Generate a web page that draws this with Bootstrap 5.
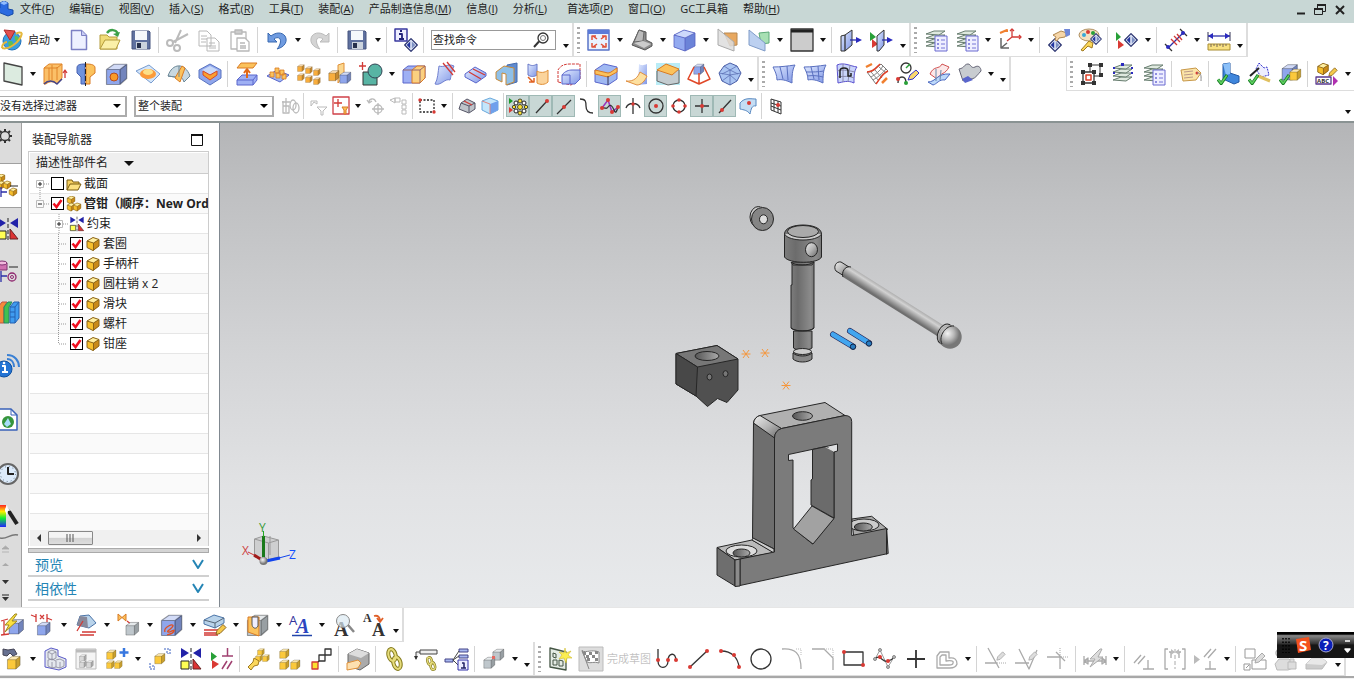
<!DOCTYPE html>
<html lang="zh-CN">
<head>
<meta charset="utf-8">
<meta name="viewport" content="width=device-width, initial-scale=1">
<title>装配</title>
<link href="https://cdn.jsdelivr.net/npm/bootstrap@5.3.0/dist/css/bootstrap.min.css" rel="stylesheet">
<style>
body{font:12px/16px "Open Sans","Noto Sans CJK SC",sans-serif;color:#222;background:#fff}
button,select,input{font:inherit;color:inherit}
button{background:none;border:0;padding:0}
.menubar{background:#c8d7d5;height:23px;font-size:11px;padding-bottom:6px}
.menus{gap:15px}
.menus a{color:#222;text-decoration:none;white-space:nowrap}
.wide{margin-left:5px}
.band{height:34px;margin-left:-4px}
.band-options{height:32px;border-bottom:2px solid #8a9393}
.strip{border:solid #ddd;border-width:0 2px 1px 0;font-size:11px}
.strip-left{border-left:1px solid #ddd}
.caption{padding:0 1px;white-space:nowrap}
.tool{width:31px;height:30px;flex:none;display:flex;align-items:center;justify-content:center}
.tool svg{width:24px;height:24px;overflow:visible}
.tool.narrow{width:23px;height:22px}
.tool.narrow svg{width:20px;height:20px}
.tool.pressed{background:#c8d7d5;border:1px solid #9fb9b5}
.arrow{width:12px;height:30px;flex:none;display:flex;align-items:center;justify-content:center}
.arrow::after{content:"";border:solid transparent;border-width:4px 3px 0;border-top-color:#111}
.arrow.more{align-items:flex-end;padding-bottom:7px}
.rule{width:1px;height:26px;background:#d4d4d4;margin:0 3px 0 2px;flex:none}
.band-options .rule{margin:0 2px}
.grip{width:3px;height:26px;margin:0 3px;flex:none;background:repeating-linear-gradient(#aaa 0 2px,#fff 2px 5px)}
.finder{width:125px;height:20px;border:1px solid #999;margin:0 4px}
.finder input{border:0;outline:0;padding:0 1px;font-size:11px;width:100px;background:none}
.finder input::placeholder{color:#222;opacity:1}
.picker{height:21px;border:2px solid #acacac;border-width:1px 2px 2px;padding:0 2px;font-size:11px;line-height:16px;border-radius:0;appearance:none;background:#fff url("data:image/svg+xml,%3Csvg xmlns='http://www.w3.org/2000/svg' viewBox='0 0 8 4'%3E%3Cpath d='M0 0h8L4 4z'/%3E%3C/svg%3E") no-repeat right 4px center/8px 4px}
.picker-filter{width:131px}.picker-scope{width:140px;margin:0 4px 0 7px}
.work{border-bottom:1px solid #e6e6e6}
.tabs{width:22px;background:#dcdcdc;border-right:1px solid #a0a0a0;overflow:hidden}
.tabs button{flex:none;height:42px;width:21px;display:flex;align-items:center}
.tabs svg{width:24px;height:24px;flex:none;margin-left:-4px}
.tabs .head{height:41px;border-bottom:1px solid #a0a0a0;padding-bottom:14px}
.tabs .current{height:44px;width:22px;background:#fff;border-bottom:1px solid #a0a0a0}
.tabs .tall{height:54px}.tabs .short{height:30px}
.tabs .step{height:16px}.tabs .step svg{height:16px}
.tabs .wave{height:10px;margin:0}
.tabs .group{margin-top:5px}
.navigator{width:198px;border-right:1px solid #808890;background:#fff}
.nav-head{padding:5px 16px 0 10px;height:28px;line-height:20px}
.tree{margin:0 10px 0 6px;border:1px solid #ccc;border-bottom:0;padding:1px 0 0 1px;overflow:hidden;min-height:0}
.tree-head{height:21px;background:#efefef;border-bottom:1px solid #ccc;padding:2px 6px;flex:none}
.rows{list-style:none;margin:0;padding:0;flex:1 1 0;min-height:0;overflow:hidden}
.rows li{height:20px;display:flex;align-items:center;border-bottom:1px solid #e6e6e6;white-space:nowrap;padding-left:6px}
.rows li:nth-child(even){background:#fafafa}
.rows .l2{padding-left:25px}
.rows .l3{padding-left:27px}
.rows label,.rows span{padding-left:2px}
.rows .fw-bold{font-weight:700!important}
.rows svg{width:16px;height:16px;flex:none}
.rows .twig{width:14px;height:20px}
.rows .joint{width:12px}
.rows input{appearance:none;width:13px;height:13px;border:1px solid #000;margin:0 2px 0 1px;flex:none;background:#fff;border-radius:0}
.rows input:checked{background:#fff url("data:image/svg+xml,%3Csvg xmlns='http://www.w3.org/2000/svg' viewBox='0 0 12 12'%3E%3Cpath d='M2 6l3 3.5L10 2.5' fill='none' stroke='%23f01020' stroke-width='2.6'/%3E%3C/svg%3E") center/12px 12px}
.slider{height:16px;background:#f0f0f0;flex:none}
.slider button{width:18px}
.thumb{width:45px!important;height:14px;border:1px solid #888!important;background:linear-gradient(#f4f4f4 45%,#d2d2d2 50%,#dedede)!important;border-radius:1px}
.splitter{height:5px;margin:2px 10px 0 6px;background:#d4d4d4;border:1px solid #aaa;flex:none}
.fold{margin:0 10px 0 6px;height:24px;flex:none;border-bottom:2px solid #d0d0d0!important;color:#2585b5;font-size:14px;padding:2px 5px 0 7px;text-align:left}
.fold svg{width:12px;height:12px}
.nav-foot{height:6px;flex:none}
.scene{background:linear-gradient(#b4b5b7,#c0c1c3 16%,#d3d4d6 48%,#e1e2e4 75%,#e8eaec)}
.scene svg{position:absolute;inset:0;width:100%;height:100%}
.base{height:3px;border-top:2px solid #a8a8a8;background:#f4f4f4}
.ime{position:absolute;right:0;bottom:21px;width:77px;height:26px;background:linear-gradient(#000 8%,#888 14%,#333 45%,#161616 50%);z-index:2}
.ime svg{width:77px;height:26px}
/* drawing palette */
svg{fill:none;stroke-linejoin:round}
.vb{fill:#9fb8f2;stroke:#5a66cc}.vo{fill:#fbc25c;stroke:#d97b24}.vy{fill:#fbd75a;stroke:#a07a20}
.vg{fill:#c4ccd0;stroke:#666}.vk{stroke:#333;stroke-width:1.3}
.redline{stroke:#d23a36;stroke-width:1.3}.vn{stroke:#2b2fa8;stroke-width:1.3}.vl{stroke:#aaa;stroke-width:1.3}
.vt{fill:#b9d3ea;stroke:#4b74a8}.dr{fill:#d93a34}.dn{fill:#2b2bbf}.dg{fill:#28a038}.dk{fill:#333}.dl{fill:#bbb}
.cy{color:#fbc93c}.cb{color:#8fa6ec}.cg{color:#bfc7cc}.co{color:#f8ad3c}.cl{color:#d8d8d8}
text{stroke:none;font-family:"Open Sans",sans-serif}
.serif{font-family:"Liberation Serif",serif;font-weight:700}
.edge{stroke:#262626;stroke-width:1}
</style>
</head>
<body class="vh-100 overflow-hidden d-flex flex-column position-relative">
<svg width="0" height="0" class="position-absolute" aria-hidden="true">
<defs>
<linearGradient id="gBall" x1="0" y1="0" x2="1" y2="1"><stop offset="0" stop-color="#eee"/><stop offset=".5" stop-color="#b5b5b5"/><stop offset="1" stop-color="#666"/></linearGradient>
<radialGradient id="gSphere" cx=".4" cy=".35"><stop offset="0" stop-color="#f4f4f4"/><stop offset=".55" stop-color="#b8b8b8"/><stop offset="1" stop-color="#777"/></radialGradient>
<linearGradient id="gShaft"><stop offset="0" stop-color="#7c7c7c"/><stop offset=".3" stop-color="#6c6c6c"/><stop offset=".85" stop-color="#8b8b8b"/><stop offset="1" stop-color="#787878"/></linearGradient>
<linearGradient id="gRod" gradientUnits="userSpaceOnUse" x1="896" y1="293" x2="889" y2="304"><stop offset="0" stop-color="#999"/><stop offset=".4" stop-color="#d2d2d2"/><stop offset="1" stop-color="#6f6f6f"/></linearGradient>
<linearGradient id="gHole"><stop offset="0" stop-color="#555"/><stop offset="1" stop-color="#aaa"/></linearGradient>
<linearGradient id="gBlue" x1="0" y1="0" x2="1" y2="1"><stop offset="0" stop-color="#e2ebff"/><stop offset="1" stop-color="#7f96e6"/></linearGradient>
<linearGradient id="gHue" x1="0" y1="0" x2="0" y2="1"><stop offset="0" stop-color="#f22"/><stop offset=".3" stop-color="#fe0"/><stop offset=".6" stop-color="#1e3"/><stop offset="1" stop-color="#22f"/></linearGradient>
</defs>
<symbol id="cube" viewBox="0 0 16 16"><path d="M1 5L6 1.500h8.500V11L10 15H1z" fill="currentColor"/><path d="M1 5L6 1.500h8.500L10 5z" fill="#fff" fill-opacity=".6"/><path d="M10 5l4.500-3.500V11L10 15z" fill="#000" fill-opacity=".2"/><path d="M1 5L6 1.500h8.500V11L10 15H1zM1 5h9v10M10 5l4.500-3.500" stroke="#000" stroke-opacity=".35" stroke-width=".8"/></symbol>
<symbol id="part" viewBox="0 0 16 16"><path d="M2 5l6-3.500 6 2V10l-6 4.500-6-3z" fill="#f6bf2c"/><path d="M2 5l6-3.500 6 2L8.500 7z" fill="#ffeFA0"/><path d="M8.500 7L14 3.500V10l-5.500 4.500z" fill="#c98a18"/><path d="M2 5l6-3.500 6 2V10l-6 4.500-6-3zM2 5l6.500 2v7.500M8.500 7L14 3.500" stroke="#8a6418"/></symbol>
<symbol id="parts" viewBox="0 0 16 16"><use href="#part" x="0" y="-1" width="10" height="10"/><use href="#part" x="0" y="6" width="10" height="10"/><use href="#part" x="6" y="6" width="10" height="10"/></symbol>
<symbol id="gem" viewBox="0 0 14 14"><path d="M7 .7L13.300 7 7 13.300.7 7z" fill="#dfe6f6" stroke="#27306e" stroke-width="1.200"/><path d="M6.200 3.500v7L2.700 7z" fill="#2335a0"/><path d="M7.800 3.500v7L11.300 7z" fill="#7d90c4"/></symbol>
<symbol id="layers" viewBox="0 0 24 24"><g fill="#dfe9df" stroke="#667c6e"><path d="M2 18l8-3h11l-6 4z"/><path d="M2 14l8-3h11l-6 4z"/><path d="M2 10l8-3h11l-6 4z"/><path d="M2 6l8-3h11l-6 4z"/></g></symbol>
<symbol id="list" viewBox="0 0 24 24"><path d="M11 8h12v15H11z" fill="#eef" stroke="#6a6ad0"/><path d="M13.500 11.500h1v1h-1zM13.500 15.500h1v1h-1zM13.500 19.500h1v1h-1zM17 12h4M17 16h4M17 20h4" stroke="#55c" stroke-width=".8"/></symbol>
<symbol id="ok" viewBox="0 0 12 12"><path d="M1 6l3.500 4.500L11 1" stroke="#157a22" stroke-width="3.400"/><path d="M1.300 6l3.200 4L10.700 1.500" stroke="#5fd060" stroke-width="1.800"/></symbol>
<symbol id="mate" viewBox="0 0 24 24"><path d="M2 1v10l8-5zM22 1v10l-8-5z" fill="#2222a8"/><path d="M12 1v22" stroke="#222" stroke-dasharray="4 2"/><path d="M2 14h8v8H2z" fill="#ff5" stroke="#222"/><path d="M14 12v10h8z" fill="#d33" stroke="#622"/></symbol>
<symbol id="disk" viewBox="0 0 24 24"><path d="M3 3h17l1 1v17H3z" fill="#5f719f" stroke="#46557e"/><path d="M6 3h12v9H6z" fill="#f5f8fb"/><path d="M7 14h11v7H7z" fill="#cbd3dd"/><path d="M8 15h4v5H8z" fill="#26304c"/></symbol>
<symbol id="pencil" viewBox="0 0 12 12"><path d="M1 11l1-4 6-6 3 3-6 6z" fill="#f5c94c" stroke="#8a6420"/></symbol>
<symbol id="graypen" viewBox="0 0 12 12"><path d="M1 11l1-4 6-6 3 3-6 6z" fill="#ddd" stroke="#aaa"/></symbol>
<symbol id="chain" viewBox="0 0 24 24"><g stroke="#857b1c" stroke-width="4"><ellipse cx="9" cy="8" rx="3.500" ry="6" transform="rotate(-15 9 8)"/><ellipse cx="14" cy="16" rx="3.500" ry="6" transform="rotate(-15 14 16)"/></g><g stroke="#e6dc7c" stroke-width="2"><ellipse cx="9" cy="8" rx="3.500" ry="6" transform="rotate(-15 9 8)"/><ellipse cx="14" cy="16" rx="3.500" ry="6" transform="rotate(-15 14 16)"/></g></symbol>
</svg>

<header class="menubar d-flex align-items-center flex-shrink-0">
<svg width="16" height="16" viewBox="0 0 16 16" class="flex-shrink-0" aria-hidden="true"><path d="M0 2l4-2 4 2v6l5 1v4l-5 2-10-4 1-3 1-1z" fill="#2b6be0" stroke="#154aa8"/><path d="M0 2l4-2 4 2-4 2z" fill="#8fbcff"/></svg>
<nav class="menus d-flex flex-grow-1 ps-1"><a href="#">文件(<u>F</u>)</a><a href="#">编辑(<u>E</u>)</a><a href="#">视图(<u>V</u>)</a><a href="#">插入(<u>S</u>)</a><a href="#">格式(<u>R</u>)</a><a href="#">工具(<u>T</u>)</a><a href="#">装配(<u>A</u>)</a><a href="#">产品制造信息(<u>M</u>)</a><a href="#">信息(<u>I</u>)</a><a href="#">分析(<u>L</u>)</a><a href="#" class="wide">首选项(<u>P</u>)</a><a href="#">窗口(<u>O</u>)</a><a href="#">GC工具箱</a><a href="#">帮助(<u>H</u>)</a></nav>
<div class="d-flex gap-2 pe-2 flex-shrink-0">
<button aria-label="最小化"><svg width="10" height="12" viewBox="0 0 10 12"><path d="M1 9.500h8" stroke="#222" stroke-width="2"/></svg></button>
<button aria-label="还原"><svg width="12" height="12" viewBox="0 0 12 12" stroke="#222"><path d="M3.500 4V1.500h8v6H9" /><path d="M3 1h9M0 5h9" stroke-width="2"/><path d="M.5 5h8v5.500h-8z"/></svg></button>
<button aria-label="关闭"><svg width="12" height="12" viewBox="0 0 12 12"><path d="M2 2l8 8M10 2l-8 8" stroke="#222" stroke-width="2"/></svg></button>
</div>
</header>

<div class="band d-flex flex-shrink-0" role="toolbar" aria-label="标准">
<div class="strip d-flex align-items-center">
<button class="tool" aria-label="NX"><svg viewBox="0 0 24 24"><circle cx="12" cy="13" r="9" fill="#3a9fe0" stroke="#2270b8"/><path d="M8 14c3-2 5-1 5 2s-2 5-4 3zM15 8c3 0 5 2 4 6-3 1-5-3-4-6z" fill="#5cbf55"/><path d="M2 20c6 2 18-5 20-15M2 20c0-4 3-6 5-6M22 5c-3-1-5 0-6 1" stroke="#e5b83c" stroke-width="2"/><path d="M4 2l11 1-5 9z" fill="#e05050" stroke="#b02a2a"/></svg></button><button class="caption">启动</button><button class="arrow" aria-label="启动菜单"></button>
<button class="tool" aria-label="新建"><svg viewBox="0 0 24 24"><path d="M4.500 2.500h10l5 5v14h-15z" fill="#eef0ff" stroke="#7d80c4" stroke-width="1.500"/><path d="M14.500 2.500v5h5" fill="#c8ccf4" stroke="#7d80c4"/></svg></button>
<button class="tool" aria-label="打开"><svg viewBox="0 0 24 24"><path d="M2 7h7l2 2h8v12H2z" fill="#f0dc78" stroke="#b49c3c"/><path d="M2 21l5-9h15l-4 9z" fill="#fbf0a8" stroke="#b49c3c"/><path d="M9 5c3-4 9-4 11 1" stroke="#3ca048" stroke-width="2.500"/><path d="M22 4l-2 5-5-3z" fill="#3ca048"/></svg></button>
<button class="tool" aria-label="保存"><svg><use href="#disk"/></svg></button><i class="rule"></i>
<button class="tool" aria-label="剪切"><svg viewBox="0 0 24 24" stroke="#bbb" stroke-width="2"><path d="M15 2L9 15M22 6L7 14"/><circle cx="4" cy="15" r="3"/><circle cx="11" cy="20" r="3"/></svg></button>
<button class="tool" aria-label="复制"><svg viewBox="0 0 24 24" fill="#f4f4f4" stroke="#b8b8b8"><path d="M2 3h8l4 4v11H2zM10 10h8l4 4v9H10z"/><path d="M4 8h6M4 11h6M4 14h5M12 15h6M12 18h7M12 20h7"/></svg></button>
<button class="tool" aria-label="粘贴"><svg viewBox="0 0 24 24" fill="#f0f0f0" stroke="#b8b8b8" stroke-width="1.300"><path d="M3 4h15v17H3z"/><path d="M7 2h7v4H7z" fill="#ccc"/><path d="M9 10h8l4 4v9H9z" fill="#fff"/><path d="M12 15h5M12 18h6M12 20h6"/></svg></button><i class="rule"></i>
<button class="tool" aria-label="撤销"><svg viewBox="0 0 24 24"><path d="M3 5v9h9l-3-3c4-3 8-1 6 5-1 3-3 5-3 5 8-2 11-8 8-13-3-4-9-4-14 0z" fill="#6f9be0" stroke="#3868b0"/></svg></button><button class="arrow" aria-label="撤销菜单"></button>
<button class="tool" aria-label="重做"><svg viewBox="0 0 24 24"><path d="M21 5v9h-9l3-3c-4-3-8-1-6 5 1 3 3 5 3 5-8-2-11-8-8-13 3-4 9-4 14 0z" fill="#d4d4d4" stroke="#bbb"/></svg></button><i class="rule"></i>
<button class="tool" aria-label="另存"><svg><use href="#disk"/></svg></button><button class="arrow" aria-label="保存菜单"></button><i class="rule"></i>
<button class="tool" aria-label="命令信息"><svg viewBox="0 0 24 24"><path d="M1 1h12v12H1z" fill="#eef" stroke="#3a3aa0" stroke-width="1.500"/><path d="M6 3h2M5 6h3v5M5 11h5" stroke="#22227a" stroke-width="1.800"/><use href="#gem" x="10" y="10" width="14" height="14"/></svg></button><i class="rule"></i>
<div class="finder d-flex align-items-center"><input type="text" placeholder="查找命令" aria-label="查找命令"><svg width="18" height="18" viewBox="0 0 18 18"><circle cx="11" cy="7" r="5" class="vk"/><circle cx="11" cy="7" r="2.500" stroke="#777"/><path d="M7 10.500L2 16" stroke="#333" stroke-width="2"/></svg></div>
<button class="arrow more" aria-label="更多"></button></div>
<div class="strip d-flex align-items-center"><i class="grip"></i>
<button class="tool" aria-label="适合窗口"><svg viewBox="0 0 24 24"><path d="M1 2h21v20H1z" fill="#eaf2fe" stroke="#5a74c8" stroke-width="1.500"/><path d="M1 2h21v4H1z" fill="#5a7ad8"/><path d="M6 8l4 3M18 8l-4 3M6 19l4-3M18 19l-4-3M5 12V8h4M19 12V8h-4M5 15v4h4M19 15v4h-4" stroke="#e05038" stroke-width="1.500"/></svg></button><button class="arrow" aria-label="视图菜单"></button>
<button class="tool" aria-label="渲染"><svg viewBox="0 0 24 24"><path d="M4 13L9 2l7 2v8l6 3v3l-7 4L2 17z" fill="#8c8c8c" stroke="#555"/><path d="M9 2l5 2-1 9-9 1z" fill="#bbb" stroke="#666"/><path d="M4 15l9-2 8 3-7 4z" fill="#ccc"/></svg></button><button class="arrow" aria-label="渲染菜单"></button>
<button class="tool" aria-label="定向视图"><svg viewBox="0 0 24 24"><path d="M1 7l10-5 11 3v13l-10 5-11-4z" fill="#6b83d8"/><path d="M1 7l10-5 11 3-10 5z" fill="#cdd9fb"/><path d="M1 7l11 3v13L1 19z" fill="#93aaf0"/><path d="M1 7l11 3 10-5M12 10v13M1 7l10-5 11 3v13l-10 5-11-4z" stroke="#5560c0" stroke-width=".8"/></svg></button><button class="arrow" aria-label="定向菜单"></button>
<button class="tool" aria-label="剖切"><svg viewBox="0 0 24 24"><path d="M8 5h13v12l-7 1z" fill="#e8a860" stroke="#b88850"/><path d="M2 1v16l16 6V14z" fill="#ddd" fill-opacity=".85" stroke="#aaa"/></svg></button>
<button class="tool" aria-label="编辑剖切"><svg viewBox="0 0 24 24"><path d="M12 5l10-1v11l-8 1z" fill="#a8e0b4" stroke="#5ca878"/><path d="M2 2l16 13v8L2 17z" fill="#bcd0f0" stroke="#809cc8"/></svg></button><button class="arrow" aria-label="剖切菜单"></button>
<button class="tool" aria-label="背景"><svg viewBox="0 0 24 24"><path d="M1 1h22v22H1z" fill="#ccc" stroke="#333" stroke-width="1.300"/><path d="M1 3h22" stroke="#222" stroke-width="3"/></svg></button><button class="arrow" aria-label="背景菜单"></button><i class="rule"></i>
<button class="tool" aria-label="窗口移出"><svg viewBox="0 0 24 24"><path d="M2 8l4-1 7-5v15l-7 6H2z" fill="url(#gBlue)" stroke="#333"/><path d="M6 7v16" class="vk"/><path d="M11 12h7" class="vn"/><path d="M17 9l6 3-6 3z" class="dn"/></svg></button>
<button class="tool" aria-label="显示隐藏"><svg viewBox="0 0 24 24"><path d="M0 4v9l6-4z" class="dg"/><path d="M2 11v9l6-4z" class="dr"/><path d="M7 8l7-6v15l-5 6H7z" fill="url(#gBlue)" stroke="#333"/><path d="M12 12h6" class="vn"/><path d="M17 9l6 3-6 3z" class="dn"/></svg></button>
<button class="arrow more" aria-label="更多"></button></div>
<div class="strip d-flex align-items-center"><i class="grip"></i>
<button class="tool" aria-label="图层设置"><svg viewBox="0 0 24 24"><use href="#layers"/><use href="#list"/></svg></button>
<button class="tool" aria-label="图层视图"><svg viewBox="0 0 24 24"><use href="#layers"/><use href="#list"/></svg></button><button class="arrow" aria-label="图层菜单"></button>
<button class="tool" aria-label="坐标系"><svg viewBox="0 0 24 24"><path d="M14 2v7h9M14 9l-5 4" class="redline"/><path d="M12 3l2-2 2 2M21 7l2 2-2 2" class="redline"/><path d="M3 10v10h8M3 20l6-5" stroke="#666" stroke-width="1.500"/><path d="M2 5l7-3v2" stroke="#f08030" stroke-width="2"/></svg></button><button class="arrow" aria-label="坐标系菜单"></button><i class="rule"></i>
<button class="tool" aria-label="对象显示"><svg viewBox="0 0 24 24"><use href="#gem" x="1" y="10" width="14" height="14"/><path d="M6 7l8-4 6 2-2 4-6 1-2 3-2-1 1-3z" fill="#f6d6a8" stroke="#b08850"/><path d="M17 1h6v6l-4 2z" fill="#7088d8"/></svg></button>
<button class="tool" aria-label="编辑对象显示"><svg viewBox="0 0 24 24"><ellipse cx="11" cy="7" rx="10" ry="6" fill="#f4e0c0" stroke="#b09060"/><circle cx="6" cy="7" r="2" fill="#38a8d8"/><circle cx="10" cy="4" r="2" class="dr"/><circle cx="15" cy="5" r="2" class="dg"/><path d="M3 22l8-9 4 2-1 5-4-2-5 5z" class="vy"/><use href="#gem" x="12" y="5" width="12" height="12"/></svg></button><i class="rule"></i>
<button class="tool" aria-label="显示"><svg viewBox="0 0 24 24"><path d="M1 4v9l5-4z" class="dg"/><path d="M3 12v9l6-4z" class="dr"/><use href="#gem" x="9" y="5" width="14" height="14"/></svg></button><button class="arrow" aria-label="显示菜单"></button><i class="rule"></i>
<button class="tool" aria-label="测量"><svg viewBox="0 0 24 24"><path d="M4 20L20 4" class="vn"/><path d="M1 16l7 7M16 1l7 7" class="vk"/><path d="M7 11l6 6M10 8l6 6M13 6l5 6" class="redline"/><circle cx="4" cy="19" r="2" class="dn"/><circle cx="19" cy="5" r="2" class="dn"/></svg></button><button class="arrow" aria-label="测量菜单"></button>
<button class="tool" aria-label="测量距离"><svg viewBox="0 0 24 24"><path d="M1 8h22" class="vn"/><path d="M1 4v9M23 4v9" stroke="#335"/><path d="M1 8l5-3v6zM23 8l-5-3v6z" class="dn"/><path d="M1 16h22v6H1z" fill="#f8e080" stroke="#a88c30"/><path d="M4 16v3M7 16v2M10 16v3M13 16v2M16 16v3M19 16v2" stroke="#765"/></svg></button>
<button class="arrow more" aria-label="更多"></button></div>
</div>

<div class="band d-flex flex-shrink-0" role="toolbar" aria-label="特征">
<div class="strip d-flex align-items-center">
<button class="tool" aria-label="基准平面"><svg viewBox="0 0 24 24"><path d="M4 1l18 4v18L4 19z" fill="#dcebe0" stroke="#444" stroke-width="1.300"/></svg></button><button class="arrow" aria-label="基准菜单"></button>
<button class="tool" aria-label="拉伸"><svg viewBox="0 0 24 24"><path d="M1 6l5-4h13v14l-5 6c-3-3-8-3-11 0H1z" fill="#fbc068" stroke="#e08428"/><path d="M6 6v12M14 5v13M1 6h13l5-4M9 3v15" stroke="#e08428"/><path d="M1 22c4-4 9-4 13 0l5-5" stroke="#448" stroke-width="1.500"/><path d="M22 16V9M20 11l2-3 2 3" class="redline"/></svg></button>
<button class="tool" aria-label="旋转"><svg viewBox="0 0 24 24"><path d="M11 2c-6 0-8 1-8 4v5l4 4v7h4z" fill="#6f92dc" stroke="#4860b0"/><path d="M12 2c6 0 9 1 9 4v5l-5 4v7h-4z" class="vo"/><path d="M11.500 0v24" stroke="#222" stroke-dasharray="5 2"/></svg></button>
<button class="tool" aria-label="孔"><svg viewBox="0 0 24 24"><use href="#cube" class="cb" width="24" height="24"/><circle cx="9" cy="15" r="4" fill="#fb9b2a" stroke="#b84c20"/></svg></button>
<button class="tool" aria-label="凸台"><svg viewBox="0 0 24 24"><path d="M0 9l13-6 11 9-9 9z" fill="#d4e6fa" stroke="#789cd0"/><ellipse cx="12" cy="12" rx="8" ry="5" fill="#fb9b3a"/><ellipse cx="12" cy="10" rx="5" ry="3" fill="#fde088"/></svg></button>
<button class="tool" aria-label="筋板"><svg viewBox="0 0 24 24"><path d="M1 14C5 1 18 0 23 14l-6 6c-2-6-6-7-9-5z" fill="#c8d8e0" stroke="#6c8898"/><path d="M8 16l7-12 3 2-5 14z" class="vo"/><path d="M1 14l7 1M12 4v11" stroke="#6c8898"/></svg></button>
<button class="tool" aria-label="腔体"><svg viewBox="0 0 24 24"><path d="M1 8l11-6 11 6v8l-11 7L1 16z" fill="#8fa6ec" stroke="#5a74c0"/><path d="M4 8l8-4 8 4-8 5z" fill="#c8d8f8"/><path d="M5 9l7 4 7-4v4l-7 5-7-5z" fill="#fba030" stroke="#d84828"/></svg></button><i class="rule"></i>
<button class="tool" aria-label="偏置面"><svg viewBox="0 0 24 24"><path d="M6 1h16l-4 5H2z" class="vo"/><path d="M2 18l5-5h15v5l-4 5H2z" fill="#9fb0f4" stroke="#5a66cc"/><path d="M2 18h16l4-5M18 18v5" stroke="#5a66cc"/><path d="M12 16V8M9 11l3-4 3 4" stroke="#e06818" stroke-width="2"/></svg></button>
<button class="tool" aria-label="阵列特征"><svg viewBox="0 0 24 24"><path d="M1 14l10-6 12 5-9 7z" class="vb"/><g class="vo" stroke-width=".8"><path d="M4 10h4v5H4zM9 6h4v5H9zM10 11h4v5h-4zM14 8h4v5h-4zM16 12h4v5h-4z"/></g></svg></button>
<button class="tool" aria-label="阵列几何"><svg viewBox="0 0 24 24" class="co"><use href="#cube" width="8" height="8" y="2"/><use href="#cube" width="8" height="8" x="8" y="4"/><use href="#cube" width="8" height="8" x="16" y="6"/><use href="#cube" width="8" height="8" y="11"/><use href="#cube" width="8" height="8" x="8" y="13"/><use href="#cube" width="8" height="8" x="16" y="15"/></svg></button>
<button class="tool" aria-label="镜像"><svg viewBox="0 0 24 24"><path d="M10 3l6-2v12l-6 8z" fill="#fbd890" stroke="#e09038"/><use href="#cube" class="co" x="0" y="7" width="12" height="13"/><use href="#cube" class="cb" x="11" y="9" width="13" height="13"/></svg></button>
<button class="tool" aria-label="合并"><svg viewBox="0 0 24 24"><path d="M4 10h14v13H4z" fill="#58b4a4" stroke="#333"/><circle cx="16" cy="9" r="7" fill="#58b4a4" stroke="#345"/><path d="M0 4h7M3.500 0v8" class="redline"/></svg></button><button class="arrow" aria-label="布尔菜单"></button>
<button class="tool" aria-label="拆分体"><svg viewBox="0 0 24 24"><path d="M1 8l5-4h17v12l-5 5H1z" fill="#9fb0f4" stroke="#5a66cc"/><path d="M10 8l5-4h8v12l-5 5h-8z" fill="#fbd080" stroke="#d87828"/><path d="M1 8h17v13M18 8l5-4" stroke="#966"/></svg></button>
<button class="tool" aria-label="修剪片体"><svg viewBox="0 0 24 24"><path d="M6 4c5 2 9-3 15 0-3 6-3 12-4 14-5-2-9 6-15 4 3-5 3-12 4-18z" fill="url(#gBlue)" stroke="#7080d0"/><path d="M10 1l10 12M14 0l8 10" class="redline"/></svg></button>
<button class="tool" aria-label="缝合"><svg viewBox="0 0 24 24"><path d="M1 12l10-7 11 6v3l-10 7-11-6z" fill="url(#gBlue)" stroke="#5a66cc"/><path d="M5 10l12 7M9 7l12 6" class="redline"/></svg></button>
<button class="tool" aria-label="抽壳"><svg viewBox="0 0 24 24"><path d="M12 3l10-2v19l-10 3z" fill="#5f8bd0" stroke="#456cae"/><path d="M1 10l8-6 10 2v14l-8 3V12l-4-1v9l-6-3z" fill="#8fc0e8" stroke="#c88a38"/></svg></button>
<button class="tool" aria-label="加厚"><svg viewBox="0 0 24 24"><path d="M2 2c3 2 6 2 9 0v11c-3 2-6 2-9 0z" fill="url(#gBlue)" stroke="#6878c8"/><path d="M11 9c3 2 8 2 11-1v12c-3 3-8 3-11 1z" fill="#fbd49c" stroke="#e09038"/><path d="M2 15l5 5M3 20h5v-4" stroke="#e06020" stroke-width="1.500"/></svg></button>
<button class="tool" aria-label="偏置"><svg viewBox="0 0 24 24"><path d="M1 20V8c3-5 7-6 12-6h10v15l-9 6z" stroke="#d23a36" stroke-dasharray="3 1"/><path d="M5 22V13c3-4 7-5 10-5h8v9l-5 5z" fill="url(#gBlue)" stroke="#5a66cc"/><path d="M5 13h8v9" stroke="#5a66cc"/></svg></button><i class="rule"></i>
<button class="tool" aria-label="边倒圆"><svg viewBox="0 0 24 24"><path d="M1 8l9-6 13 3v12l-9 6-13-3z" class="vb"/><path d="M1 8l13 3c3 0 5-3 9-5v4l-9 5-13-3z" class="vo"/><path d="M14 14v9" stroke="#335"/></svg></button>
<button class="tool" aria-label="面倒圆"><svg viewBox="0 0 24 24"><path d="M14 2c3 2 5 1 8 0v20l-9 1z" fill="url(#gBlue)"/><path d="M1 19c8 1 12-4 14-9l7 4c-2 5-6 9-10 9z" fill="#fde0a0" stroke="#e09040"/></svg></button>
<button class="tool" aria-label="倒斜角"><svg viewBox="0 0 24 24"><path d="M0 1h24v22H0z" fill="#b9ecf6"/><path d="M1 9l10-6 12 5v13l-11 2-11-4z" class="vg"/><path d="M1 8l9-6 13 5-7 6z" class="vo"/></svg></button>
<button class="tool" aria-label="拔模"><svg viewBox="0 0 24 24"><use href="#cube" class="cb" x="6" y="1" width="12" height="12"/><path d="M7 5L1 17l11 5 11-5-6-12M12 11v11" stroke="#e04828" stroke-width="1.500"/></svg></button>
<button class="tool" aria-label="体"><svg viewBox="0 0 24 24"><path d="M6 4l6-3 7 3 4 7-4 8-7 4-8-4-3-8z" fill="#a9c4f2" stroke="#4b5fa8"/><path d="M6 4l6 4 7-4M1 11l11 2 11-2M12 8v15M4 19l8-6 7 6M12 8l-8 4M12 8l8 4" stroke="#5c70b4" stroke-width=".8"/></svg></button>
<button class="arrow more" aria-label="更多"></button></div>
<div class="strip d-flex align-items-center"><i class="grip"></i>
<button class="tool" aria-label="直纹"><svg viewBox="0 0 24 24"><path d="M1 5c7 0 15-1 22-2-3 5-3 12-3 18-6-3-11-4-15-3 0-5-2-9-4-13z" fill="url(#gBlue)" stroke="#5a70c0"/><path d="M8 5l3 12M15 4l1 14" stroke="#5a70c0"/></svg></button>
<button class="tool" aria-label="通过曲线网格"><svg viewBox="0 0 24 24"><path d="M1 5c7 0 15-1 22-2-3 5-3 12-3 18-6-3-11-4-15-3 0-5-2-9-4-13z" fill="url(#gBlue)" stroke="#5a70c0"/><path d="M8 5l3 12M15 4l1 14M3 10c7 0 12 0 18-1M4 14c7-1 12 0 16 1" stroke="#5a70c0"/></svg></button>
<button class="tool" aria-label="扫掠"><svg viewBox="0 0 24 24"><path d="M3 3c7-3 13 1 20 2-3 4-3 9-3 16-6-3-11-1-16 0z" fill="#c9d4fa" stroke="#5a50d0"/><path d="M3 9c7-2 13 0 18 1M3 15c7-1 13-1 17 1M9 2v18M16 3l-2 17" stroke="#88a"/><path d="M6 16V9c0-4 8-4 8 0v5h3v-3" stroke="#222" stroke-width="1.500"/></svg></button>
<button class="tool" aria-label="曲面变形"><svg viewBox="0 0 24 24"><path d="M2 10c7 0 9-4 14-8l7 7c-5 2-7 6-12 13z" fill="#fff" stroke="#777"/><path d="M6 10l8 9M10 8l7 8M14 5l7 6M6 15c5-3 9-6 12-11M8 18c5-3 9-6 13-11" stroke="#888"/><path d="M2 10c6 0 9-4 13-8M23 9c-5 2-7 6-12 13" stroke="#e04028" stroke-width="1.500"/><path d="M1 5l6-3M17 21l5-5" stroke="#f08030" stroke-width="2.500"/></svg></button>
<button class="tool" aria-label="曲线编辑"><svg viewBox="0 0 24 24"><circle cx="10" cy="6" r="5" class="vk"/><path d="M10 6l4-4" stroke="#28a038" stroke-width="1.500"/><path d="M2 21c0-8 8-8 8 0" class="vk"/><circle cx="2" cy="17" r="2" class="dr"/><circle cx="10" cy="21" r="2" class="dg"/><path d="M12 18l2-5 6-5 3 3-6 6z" fill="#f8d870" stroke="#33c"/></svg></button>
<button class="tool" aria-label="桥接曲面"><svg viewBox="0 0 24 24"><path d="M3 12c4-9 9-4 12-10l7 3c-4 8-8 5-12 12z" fill="#fce8e8" stroke="#d05050"/><path d="M1 20c8 0 9-9 22-8l-5 6c-6-1-8 4-12 5z" fill="#bcd8fa" stroke="#4a68c0"/><path d="M9 7v12M14 8l-1 10" stroke="#68a"/></svg></button>
<button class="tool" aria-label="艺术曲面"><svg viewBox="0 0 24 24"><path d="M1 7c6-1 5-5 9-5 3 0 3 5 7 3 3-2 6 0 6 4-3 3-5 7-9 8-5-2-8 2-9 2z" fill="#c8ccd0" stroke="#667"/><path d="M4 17l6-3 5 4-8 3z" fill="#5a66cc"/></svg></button><button class="arrow" aria-label="曲面菜单"></button>
<button class="arrow more" aria-label="更多"></button></div>
<div class="strip strip-left d-flex align-items-center ms-auto border-end-0"><i class="grip"></i>
<button class="tool" aria-label="替换"><svg viewBox="0 0 24 24"><path d="M10 3h10v11H10z" stroke="#333"/><path d="M3 10h11v11H3z" fill="#fff" stroke="#333" stroke-width="1.300"/><path d="M6 13h5v5H6z" stroke="#e04028" stroke-width="1.500"/><path class="dk" d="M8 1h4v4H8zM19 1h4v4h-4zM19 11h4v4h-4zM1 8h4v4H1zM12 8h4v4h-4zM1 19h4v4H1zM12 19h4v4h-4z"/></svg></button>
<button class="tool" aria-label="图层"><svg viewBox="0 0 24 24"><use href="#layers"/><path class="dn" d="M10 1h3v3h-3zM2 5h2v2H2zM20 5h2v2h-2zM2 10h2v2H2zM20 10h2v2h-2z"/></svg></button>
<button class="tool" aria-label="图层列表"><svg viewBox="0 0 24 24"><use href="#layers"/><use href="#list"/></svg></button><i class="rule"></i>
<button class="tool" aria-label="属性"><svg viewBox="0 0 24 24"><path d="M2 8l15-2 5 5-5 7-13 1z" fill="#fbe4a8" stroke="#c89848"/><path d="M5 10l9-1M5 13l9-1M5 16l9-1" stroke="#b98"/><circle cx="18" cy="11" r="1.500" class="dr"/><path d="M18 11c5-1 4 5 4 8" stroke="#888"/></svg></button><i class="rule"></i>
<button class="tool" aria-label="检查零件"><svg viewBox="0 0 24 24"><path d="M7 2l7-1v10l9 3v6l-5 2-11-5z" fill="#3f86dc" stroke="#2358a4"/><path d="M7 2l7-1v11l-4 1z" fill="#8cc0f8"/><use href="#ok" x="1" y="12" width="11" height="11"/></svg></button>
<button class="tool" aria-label="检查制图"><svg viewBox="0 0 24 24"><path d="M12 1l5 5 3-1 2 8-8 2-5-8z" fill="#eef" stroke="#33c" stroke-dasharray="2 1"/><path d="M3 14l9-8" stroke="#222" stroke-width="2"/><path d="M11 14l12 5" stroke="#e0c060" stroke-width="3"/><use href="#ok" x="1" y="12" width="11" height="11"/></svg></button>
<button class="tool" aria-label="检查装配"><svg viewBox="0 0 24 24"><use href="#cube" class="cb" x="3" y="0" width="18" height="20"/><use href="#cube" class="cy" x="11" y="3" width="13" height="19"/><use href="#ok" x="1" y="12" width="11" height="11"/></svg></button><i class="rule"></i>
<button class="tool" aria-label="标注"><svg viewBox="0 0 24 24"><use href="#part" x="1" y="0" width="14" height="14"/><use href="#pencil" x="13" y="4" width="10" height="12"/><path d="M1 15h15v7H1z" fill="#fff" stroke="#5a3a90" stroke-width="1.300"/><text x="2" y="21" font-size="6" font-weight="700" fill="#333">ABC</text><path d="M18 14l5 5-5 5z" fill="#b030b0"/></svg></button><button class="arrow" aria-label="更多"></button></div>
</div>

<div class="band band-options d-flex align-items-center flex-shrink-0" role="toolbar" aria-label="选择">
<select class="picker picker-filter" aria-label="类型过滤器"><option>没有选择过滤器</option></select>
<select class="picker picker-scope" aria-label="选择范围"><option>整个装配</option></select>
<button class="tool narrow" aria-label="层选择"><svg viewBox="0 0 20 20" stroke="#bbb" stroke-width="1.300"><path d="M3 5v12h6v-7H3M6 2v14M2 6h8"/><ellipse cx="13" cy="9" rx="3" ry="5"/><ellipse cx="16" cy="12" rx="3" ry="5"/></svg></button><i class="rule"></i>
<button class="tool narrow" aria-label="重置过滤器"><svg viewBox="0 0 20 20" fill="#ccc" stroke="#bbb"><path d="M3 5h6v3l-3-2-3 4zM9 11h10l-4 4v4h-2v-4z"/></svg></button>
<button class="tool narrow" aria-label="过滤器"><svg viewBox="0 0 20 20"><path d="M2 1h16v17H2z" stroke="#d04048" stroke-width="1.300"/><path d="M7 3v8M3 7h8" class="redline"/><path d="M11 11h6l-2 3v4h-2v-4z" class="vo"/></svg></button><button class="arrow" aria-label="过滤器菜单"></button>
<button class="tool narrow" aria-label="移动"><svg viewBox="0 0 20 20" stroke="#bbb" stroke-width="1.300"><circle cx="12" cy="13" r="4"/><path d="M12 7v12M6 13h12M10 6c-2-5-7-3-7 0M1 4l2 3 3-2"/></svg></button>
<button class="tool narrow" aria-label="层次"><svg viewBox="0 0 20 20" fill="#ccc" stroke="#bbb"><path d="M1 4l5-2v5zM6 2h5v4H6zM13 4h4v4h-4zM13 9h4v4h-4zM13 14h4v4h-4z"/></svg></button><i class="rule"></i>
<button class="tool narrow" aria-label="矩形选择"><svg viewBox="0 0 20 20"><path d="M3 4h14v12H3z" stroke="#222" stroke-width="1.300" stroke-dasharray="2 1.500"/><circle cx="3" cy="4" r="1.700" class="dr"/><circle cx="17" cy="16" r="1.700" class="dr"/></svg></button><button class="arrow" aria-label="选择菜单"></button><i class="rule"></i>
<button class="tool narrow" aria-label="实体"><svg viewBox="0 0 20 20"><path d="M2 13l2-6 6-4 8 4v6l-6 4z" fill="#bfc4ca" stroke="#556"/><path d="M4 7l8 3v6M12 10l6-3" stroke="#556"/><path d="M7 5l8 4" class="redline"/></svg></button>
<button class="tool narrow" aria-label="透明实体"><svg viewBox="0 0 20 20"><path d="M2 5l8-3 8 3v9l-8 4-8-4z" fill="#c4e6fb" stroke="#6aa8dc"/><path d="M10 8l8-3v9l-8 4z" fill="#6fa0ec"/><path d="M2 5l8 3v10" stroke="#e08880"/></svg></button><i class="rule"></i>
<button class="tool narrow pressed" aria-label="启用捕捉"><svg viewBox="0 0 20 20"><path d="M1 2v6l4-3z" fill="#1a9a28"/><path d="M1 11v6l4-3z" class="dr"/><g fill="#fff" stroke="#222"><circle cx="8" cy="7" r="2"/><circle cx="16" cy="7" r="2"/><circle cx="8" cy="15" r="2"/><circle cx="16" cy="15" r="2"/></g><g fill="#fbe030" stroke="#222" stroke-width=".8"><circle cx="12" cy="11" r="2.500"/><circle cx="12" cy="5" r="2"/><circle cx="18" cy="11" r="1.700"/><circle cx="6" cy="11" r="1.700"/><circle cx="12" cy="17" r="2"/></g></svg></button>
<button class="tool narrow pressed" aria-label="端点"><svg viewBox="0 0 20 20"><path d="M5 17L16 5" class="vk"/><circle cx="16" cy="5" r="2" class="dr"/></svg></button>
<button class="tool narrow pressed" aria-label="中点"><svg viewBox="0 0 20 20"><path d="M3 18L17 4" class="vk"/><circle cx="10" cy="11" r="2" class="dr"/></svg></button>
<button class="tool narrow" aria-label="控制点"><svg viewBox="0 0 20 20"><path d="M3 3c6 0 6 3 6 7s2 7 7 7" class="vk"/></svg></button>
<button class="tool narrow pressed" aria-label="极点"><svg viewBox="0 0 20 20"><path d="M2 12l6-8 4 12 6-5" stroke="#93b" stroke-width="1.500"/><path d="M2 12c4-1 4 2 6-1s4-2 6 3 3 0 4-3" class="vk"/><g class="dr"><circle cx="2" cy="12" r="2"/><circle cx="8" cy="4" r="2"/><circle cx="12" cy="16" r="2"/><circle cx="18" cy="11" r="2"/></g></svg></button>
<button class="tool narrow" aria-label="交点"><svg viewBox="0 0 20 20"><path d="M10 2v16M3 12c2-6 12-6 14 0" class="vk"/><circle cx="10" cy="8" r="1.700" class="dr"/></svg></button>
<button class="tool narrow pressed" aria-label="圆心"><svg viewBox="0 0 20 20"><circle cx="10" cy="10" r="7" class="vk"/><circle cx="10" cy="10" r="2" class="dr"/></svg></button>
<button class="tool narrow" aria-label="象限点"><svg viewBox="0 0 20 20"><circle cx="10" cy="10" r="6" class="vk"/><g class="dr"><circle cx="10" cy="4" r="1.800"/><circle cx="10" cy="16" r="1.800"/><circle cx="4" cy="10" r="1.800"/><circle cx="16" cy="10" r="1.800"/></g></svg></button>
<button class="tool narrow pressed" aria-label="现有点"><svg viewBox="0 0 20 20"><path d="M10 3v14M3 10h14" class="vk"/><circle cx="10" cy="10" r="2" class="dr"/></svg></button>
<button class="tool narrow pressed" aria-label="曲线上点"><svg viewBox="0 0 20 20"><path d="M4 17L16 4" class="vk"/><circle cx="7" cy="14" r="2" class="dr"/></svg></button>
<button class="tool narrow" aria-label="面上点"><svg viewBox="0 0 20 20"><path d="M2 7c5-6 11-4 16-4v7c-4-1-5 3-6 8-3-4-6-4-10-5z" fill="#c4ddf4" stroke="#5888c0"/><circle cx="11" cy="7" r="2" class="dr"/></svg></button><i class="rule"></i>
<button class="tool narrow" aria-label="网格点"><svg viewBox="0 0 20 20"><path d="M5 3l10 3v12L5 14zM8 4v11M12 5v12M5 7l10 3M5 10l10 4" stroke="#333"/><circle cx="12" cy="9" r="2" class="dr"/></svg></button>
<button class="arrow more ms-auto" aria-label="更多"></button>
</div>

<main class="work d-flex flex-grow-1 overflow-hidden">
<aside class="tabs d-flex flex-column flex-shrink-0">
<button class="head" aria-label="设置"><svg viewBox="0 0 24 24"><circle cx="9" cy="12" r="4.500" class="vk"/><path d="M9 5v2M9 17v2M2 12h2M14 12h2M4 7l1.500 1.500M14 7l-1.500 1.500M4 17l1.500-1.500M14 17l-1.500-1.500" stroke="#333" stroke-width="2"/></svg></button>
<button class="current" aria-label="装配导航器"><svg viewBox="0 0 24 24"><use href="#parts" x="0" y="0" width="16" height="16"/><path d="M14 12h8" stroke="#222"/><path d="M5 13v10M5 18h6" class="vn"/><use href="#part" x="12" y="13" width="10" height="10"/></svg></button>
<button aria-label="约束导航器"><svg viewBox="0 0 24 24"><use href="#mate"/></svg></button>
<button aria-label="部件导航器"><svg viewBox="0 0 24 24"><path d="M2 4h9v7H2z" fill="#d070b0" stroke="#803070"/><ellipse cx="6" cy="4" rx="5" ry="2" fill="#f0b8dc" stroke="#803070"/><path d="M13 8h9" stroke="#222"/><path d="M5 12v11M5 17h6" class="vn"/><circle cx="16" cy="18" r="4" stroke="#902870" stroke-width="1.300"/><circle cx="16" cy="18" r="1.500" stroke="#902870"/></svg></button>
<button aria-label="重用库"><svg viewBox="0 0 24 24"><path d="M2 6l4-5h5L8 6v16H2z" fill="#f48a3a" stroke="#b54"/><path d="M8 6l4-5h4l-3 5v16H8z" fill="#40c050" stroke="#286"/><path d="M14 6l4-5h5v16l-4 5h-5z" fill="#3f9cf0" stroke="#2460b0"/><path d="M14 6h5v16M19 6l4-5M14 11h5M14 16h5" stroke="#2460b0"/></svg></button>
<button class="tall group" aria-label="网页浏览"><svg viewBox="0 0 24 24"><circle cx="8" cy="15" r="8" fill="#2474d4" stroke="#0d50a0"/><path d="M6 12h3v6M6 18h6" stroke="#fff" stroke-width="2"/><circle cx="8" cy="9" r="1.300" fill="#fff"/><path d="M11 5c5 0 7 4 7 8M11 1c8 0 12 6 12 12" stroke="#3a80d4" stroke-width="2"/></svg></button>
<button class="tall" aria-label="网页"><svg viewBox="0 0 24 24"><path d="M3 1h12l6 6v15H3z" fill="#fff" stroke="#3a62b8" stroke-width="1.500"/><path d="M15 1v6h6" stroke="#3a62b8"/><circle cx="12" cy="14" r="6" fill="#36953c"/><path d="M12 10l3 6-4 3-3-3z" fill="#a8ddf8"/></svg></button>
<button class="tall" aria-label="历史记录"><svg viewBox="0 0 24 24"><circle cx="12" cy="12" r="10" fill="#dcebfb" stroke="#666" stroke-width="2"/><circle cx="12" cy="12" r="7.500" stroke="#678" stroke-dasharray="1 3"/><path d="M12 5v7h6" stroke="#222" stroke-width="2"/></svg></button>
<button class="short" aria-label="角色"><svg viewBox="0 0 24 24"><path d="M3 1h7v22H3z" fill="url(#gHue)"/><path d="M12 6l9 14" stroke="#222" stroke-width="4"/><path d="M9 5l2-4 1 4 4 1-4 1-1 4-2-4z" fill="#fff"/></svg></button>
<svg viewBox="0 0 24 10" class="wave" aria-hidden="true"><path d="M0 7c7 2 10-5 18-3" stroke="#777" stroke-width="1.500"/></svg>
<button class="step" aria-label="到顶"><svg viewBox="0 0 24 16"><path d="M6 11h7M6 8h7L9.500 5z" fill="#aaa" stroke="#aaa" stroke-width=".8"/></svg></button>
<button class="step" aria-label="向上"><svg viewBox="0 0 24 16"><path d="M6 9h7L9.500 6z" fill="#aaa"/></svg></button>
<button class="step" aria-label="向下"><svg viewBox="0 0 24 16"><path d="M6 7h7l-3.500 4z" class="dk"/></svg></button>
<button class="step" aria-label="到底"><svg viewBox="0 0 24 16"><path d="M6 8h7l-3.500 4z" class="dk"/><path d="M6 6h7" stroke="#222"/></svg></button>
</aside>

<section class="navigator d-flex flex-column flex-shrink-0">
<div class="nav-head d-flex justify-content-between align-items-center"><span>装配导航器</span><button class="d-flex" aria-label="最大化"><svg width="12" height="12" viewBox="0 0 12 12"><path d="M.5 1h11v10.500H.5z" stroke="#111"/><path d="M0 1h12" stroke="#111" stroke-width="2"/></svg></button></div>
<div class="tree d-flex flex-column flex-grow-1">
<button class="tree-head d-flex align-items-center">描述性部件名<svg class="ms-3" width="10" height="5" viewBox="0 0 10 5"><path d="M0 0h10L5 5z" fill="#111"/></svg></button>
<ul class="rows">
<li><svg class="twig" viewBox="0 0 14 20"><path d="M.5 6.500h7v7h-7z" stroke="#bbb"/><path d="M2 10h4M4 8v4" stroke="#222"/><path d="M4 14v6M8 10h5" stroke="#999" stroke-dasharray="1 1"/></svg><input type="checkbox" id="t1"><svg viewBox="0 0 16 16"><path d="M1 14V4h5l1 2h6v2" fill="#f6d060" stroke="#7a5c10"/><path d="M1 14l3-6h11l-3 6z" fill="#fbe080" stroke="#7a5c10"/></svg><label for="t1">截面</label></li>
<li class="fw-bold"><svg class="twig" viewBox="0 0 14 20"><path d="M4 0v6M8 10h5" stroke="#999" stroke-dasharray="1 1"/><path d="M.5 6.500h7v7h-7z" stroke="#bbb"/><path d="M2 10h4" stroke="#222"/></svg><input type="checkbox" id="t2" checked><svg><use href="#parts"/></svg><label for="t2">管钳（顺序：New Ord</label></li>
<li class="l2"><svg class="twig" viewBox="0 0 14 20"><path d="M.5 6.500h7v7h-7z" stroke="#bbb"/><path d="M2 10h4M4 8v4" stroke="#222"/><path d="M4 0v6M4 14v6M8 10h5" stroke="#999" stroke-dasharray="1 1"/></svg><svg><use href="#mate"/></svg><span>约束</span></li>
<li class="l3"><svg class="twig joint" viewBox="0 0 12 20"><path d="M1.500 0v20M2 10h8" stroke="#999" stroke-dasharray="1 1"/></svg><input type="checkbox" id="t4" checked><svg><use href="#part"/></svg><label for="t4">套圈</label></li>
<li class="l3"><svg class="twig joint" viewBox="0 0 12 20"><path d="M1.500 0v20M2 10h8" stroke="#999" stroke-dasharray="1 1"/></svg><input type="checkbox" id="t5" checked><svg><use href="#part"/></svg><label for="t5">手柄杆</label></li>
<li class="l3"><svg class="twig joint" viewBox="0 0 12 20"><path d="M1.500 0v20M2 10h8" stroke="#999" stroke-dasharray="1 1"/></svg><input type="checkbox" id="t6" checked><svg><use href="#part"/></svg><label for="t6">圆柱销 x 2</label></li>
<li class="l3"><svg class="twig joint" viewBox="0 0 12 20"><path d="M1.500 0v20M2 10h8" stroke="#999" stroke-dasharray="1 1"/></svg><input type="checkbox" id="t7" checked><svg><use href="#part"/></svg><label for="t7">滑块</label></li>
<li class="l3"><svg class="twig joint" viewBox="0 0 12 20"><path d="M1.500 0v20M2 10h8" stroke="#999" stroke-dasharray="1 1"/></svg><input type="checkbox" id="t8" checked><svg><use href="#part"/></svg><label for="t8">螺杆</label></li>
<li class="l3"><svg class="twig joint" viewBox="0 0 12 20"><path d="M1.500 0v10M2 10h8" stroke="#999" stroke-dasharray="1 1"/></svg><input type="checkbox" id="t9" checked><svg><use href="#part"/></svg><label for="t9">钳座</label></li>
<li></li><li></li><li></li><li></li><li></li><li></li><li></li><li></li><li></li>
</ul>
<div class="slider d-flex align-items-center"><button class="d-flex justify-content-center" aria-label="向左"><svg width="6" height="8" viewBox="0 0 6 8"><path d="M5 0v8L1 4z" class="dk"/></svg></button><button class="thumb d-flex justify-content-center align-items-center" aria-label="滑块"><svg width="9" height="8" viewBox="0 0 9 8"><path d="M1 0v8M4 0v8M7 0v8" stroke="#555"/></svg></button><button class="ms-auto d-flex justify-content-center" aria-label="向右"><svg width="6" height="8" viewBox="0 0 6 8"><path d="M1 0v8l4-4z" class="dk"/></svg></button></div>
</div>
<div class="splitter"></div>
<button class="fold d-flex justify-content-between align-items-center">预览<svg viewBox="0 0 12 12"><path d="M1 1l5 8 5-8" stroke="#2585b5" stroke-width="2"/></svg></button>
<button class="fold d-flex justify-content-between align-items-center">相依性<svg viewBox="0 0 12 12"><path d="M1 1l5 8 5-8" stroke="#2585b5" stroke-width="2"/></svg></button>
<div class="nav-foot"></div>
</section>

<section class="scene flex-grow-1 position-relative" aria-label="图形窗口">
<svg viewBox="220 123 1134 484" preserveAspectRatio="xMinYMax meet">
<g class="edge">
<ellipse cx="758.500" cy="217" rx="8.500" ry="10.500" fill="#ccc"/><path d="M760 206.500l6 1-6 24-6-3z" fill="#bbb" stroke="none"/><ellipse cx="762.500" cy="219" rx="11" ry="11.500" fill="#858585"/><ellipse cx="763.500" cy="219.300" rx="4" ry="4.500" fill="#ddd"/>
<path d="M792 262h22v66c-4 4-18 4-23 0v-43h1z" fill="url(#gShaft)"/><path d="M793.500 331h18.500v17c-4 3-15 3-18.500 0z" fill="url(#gShaft)"/><path d="M793 353v6c4 4 15 4 19 0v-6c-3-3-16-3-19 0z" fill="#888"/><ellipse cx="802.500" cy="351.500" rx="9" ry="3" fill="#ccc"/><path d="M793 353c4 4 15 4 19 0" /><path d="M791 328c4 4 19 4 23 0"/>
<path d="M784.500 234c0-12 37-12 37 0v23c-3 7-33 7-37 0z" fill="url(#gShaft)"/><path d="M784.500 234c4 8 33 8 37 0" fill="#ccc"/><ellipse cx="803" cy="231.500" rx="15.500" ry="6" fill="#aaa"/><ellipse cx="811.500" cy="249.700" rx="6" ry="7" fill="url(#gBall)"/><path d="M791 262c4 4 18 4 23 0l-2 3h-19z" fill="#999"/>
<path d="M841 262l8 5-5 9-8-5c-3-4 0-10 5-9z" fill="url(#gBall)"/><path d="M851 267L943 325l-6 11L843 277c-2-4 1-11 8-10z" fill="url(#gRod)" stroke="none"/><path d="M843 277c-2-4 2-12 8-10" /><ellipse cx="945" cy="334" rx="7" ry="10.500" transform="rotate(25 945 334)" fill="#c4c4c4"/><circle cx="950" cy="337" r="11.700" fill="url(#gSphere)" stroke="none"/><path d="M942 344c-4-8 4-19 12-18"/>
<path d="M676 353.500l41-8 21 13.500v31l-11 12.500-9.500-4-10 8L696 396l-20-12z" fill="#505050"/><path d="M676 353.500l41-8 21 13.500-40.500 8z" fill="#777"/><path d="M676 353.500l21.500 13.500-1.500 29-20-12z" fill="#484848"/><ellipse cx="707" cy="356" rx="12" ry="4.500" fill="url(#gHole)"/><ellipse cx="709.500" cy="377" rx="2.500" ry="3" fill="#777"/><ellipse cx="725.500" cy="373.700" rx="2.500" ry="3" fill="#777"/>
</g>
<g stroke="#225" stroke-width="6" stroke-linecap="round"><path d="M833 334.500l20 12M850 331l19 12"/></g><g stroke="#43a6ef" stroke-width="4.800" stroke-linecap="round"><path d="M833 334.500l20 12M850 331l19 12"/></g><circle cx="853" cy="346.700" r="2.700" fill="#297cc0" stroke="#124"/><circle cx="869" cy="343.500" r="2.700" fill="#297cc0" stroke="#124"/>
<path d="M741.500 354h9M743 350l6 8M749 350l-6 8M760.500 353h9M762 349l6 8M768 349l-6 8M781.500 385.500h9M783 381.500l6 8M789 381.500l-6 8" stroke="#f5963c"/>
<g class="edge">
<path d="M851.700 519l20-2.700 16 13-34 7z" fill="#aaa"/><ellipse cx="864" cy="525" rx="15" ry="6" fill="#ccc"/><ellipse cx="863.300" cy="527" rx="9" ry="4" fill="url(#gHole)"/>
<path d="M717 547.500l35-7.500 22 12.500-39 7.500z" fill="#bbb"/><ellipse cx="741.500" cy="551" rx="15.500" ry="6" fill="#ddd"/><ellipse cx="741.500" cy="553" rx="8.500" ry="4" fill="url(#gHole)"/>
<path d="M717 547.500l18 12.500v26l-18-11z" fill="#6e6e6e"/><path d="M753.500 423l21 14v112l-22-11z" fill="#6e6e6e"/><path d="M753 538l21 11v4l-22-13z" fill="#ccc"/>
<path d="M753.500 423q1-6 6.500-7.500l65-13 20 13-63.500 13z" fill="#b0b0b0"/><path d="M753.500 423q1-6 6.500-7.500l21.500 13q-7 3-7 9.500z" fill="url(#gBall)"/><ellipse cx="802.500" cy="416" rx="10" ry="4.300" fill="url(#gHole)"/>
<path fill-rule="evenodd" d="M774.500 438q0-7 7-9.500l63.500-13q6.500 0 6.700 6v114l35-7 1.500 25-148.200 32V559l34.500-7zM788.500 454.500l49-10.500v7l-3.500 1v66l-21.500 26-19.500-16v-68l-4.500.5z" fill="#7b7b7b"/>
<path d="M735 560l5-1v27l-5 .5z" fill="#8c8c8c"/><path d="M886.500 529.500v25" /><path d="M812.500 449.500l14-3 7.500 5.500v66l-23-13V480l1.500-1z" fill="#6b6b6b"/><path d="M812 506l22 12.500-21 25.500-19.500-15z" fill="#a2a2a2"/><path d="M825 447l9 5v-3z" fill="#ddd" stroke="none"/>
</g>
<g><path d="M254.500 539l9-3 15 4v17l-11 3-13-3z" fill="#bbb" fill-opacity=".55" stroke="#999"/><path d="M254.500 539l14 4 10-3M268.500 543v16M270 536v19" stroke="#999"/><path d="M262 560l-8-5" stroke="#a11a1a" stroke-width="3"/><path d="M254 555l-6-3" stroke="#c33"/><path d="M266 561l14-3" stroke="#14e" stroke-width="3"/><path d="M279 558l11-3" stroke="#14e"/><path d="M263.500 559v-23" stroke="#1a7a1a" stroke-width="3"/><path d="M263.500 537v-6" stroke="#2a2"/><circle cx="263.500" cy="561" r="4" fill="url(#gSphere)"/><text x="259" y="532" font-size="12" fill="#3a9a3a">Y</text><text x="242" y="555" font-size="12" fill="#c44">X</text><text x="289" y="559" font-size="12" fill="#1450ff">Z</text></g>
</svg>
</section>
</main>

<div class="band d-flex flex-shrink-0" role="toolbar" aria-label="尺寸">
<div class="strip d-flex align-items-center">
<button class="tool" aria-label="快速尺寸"><svg viewBox="0 0 24 24"><use href="#cube" class="cb" x="8" y="4" width="17" height="19"/><path d="M4 8v14M8 6L1 8M9 21l-8 1" class="redline"/><path d="M15 1L5 12h4l-4 7 12-11h-5l5-7z" fill="#fbe040" stroke="#a08a20"/></svg></button>
<button class="tool" aria-label="线性尺寸"><svg viewBox="0 0 24 24"><use href="#cube" class="cb" x="5" y="8" width="16" height="15"/><path d="M5 1v8M16 1v8M0 2l5 2M21 7l-5-2M9 2l4 4M13 2l-4 4" class="redline"/></svg></button><button class="arrow" aria-label="菜单"></button>
<button class="tool" aria-label="径向尺寸"><svg viewBox="0 0 24 24"><path d="M3 12l3-9 9-1 7 8-7 5z" class="vt"/><path d="M3 12l3-9 7 1 1 11z" fill="#889" /><path d="M9 8L3 18M8 19h14M6 22h14" class="redline"/></svg></button><button class="arrow" aria-label="菜单"></button>
<button class="tool" aria-label="角度尺寸"><svg viewBox="0 0 24 24"><path d="M1 1v7l4-3.500L9 8V1L5 4.500z" class="vo"/><path d="M10 8l5 4" class="redline"/><use href="#cube" class="cg" x="7" y="8" width="17" height="15"/></svg></button><button class="arrow" aria-label="菜单"></button>
<button class="tool" aria-label="表面"><svg viewBox="0 0 24 24"><use href="#cube" class="cb" width="24" height="24"/><path d="M5 19c-2-5 9-9 8-6s-7 5-5 6 7-4 6-1-4 3-7 4" stroke="#e05020" stroke-width="1.300"/></svg></button><button class="arrow" aria-label="菜单"></button>
<button class="tool" aria-label="注释"><svg viewBox="0 0 24 24"><path d="M1 7l10-5 10 3v5l-9 5-11-4z" class="vt"/><path d="M1 7l11 3 9-5M12 10v5" stroke="#567"/><path d="M1 17h14M1 20h14M1 22h14" class="redline"/><use href="#pencil" x="12" y="10" width="12" height="13"/></svg></button><button class="arrow" aria-label="菜单"></button>
<button class="tool" aria-label="剖视"><svg viewBox="0 0 24 24"><use href="#cube" class="cg" x="0" y="0" width="24" height="24"/><path d="M2 4h11v19l-11-4z" class="vo"/><path d="M6 4h6v9c-2 4-6 2-6-2z" fill="#eef" stroke="#555"/></svg></button><button class="arrow" aria-label="菜单"></button>
<button class="tool" aria-label="文字"><svg viewBox="0 0 24 24"><text x="0" y="12" font-size="13" fill="#33339a">A</text><text x="7" y="20" font-size="20" font-style="italic" class="serif" fill="#2b45c0">A</text><path d="M3 22.500h20" stroke="#24a" stroke-width="1.500"/></svg></button><button class="arrow" aria-label="菜单"></button>
<button class="tool" aria-label="查找文字"><svg viewBox="0 0 24 24"><text x="2" y="23" font-size="20" class="serif" fill="#333">A</text><circle cx="11" cy="8" r="6.500" fill="#dceaf2" fill-opacity=".7" stroke="#888"/><path d="M16 12l6 7" stroke="#888" stroke-width="2.500"/></svg></button>
<button class="tool" aria-label="文字替换"><svg viewBox="0 0 24 24"><text x="0" y="9" font-size="12" class="serif" fill="#333">A</text><text x="9" y="23" font-size="18" class="serif" fill="#333">A</text><path d="M11 3c4-1 6 1 6 5M14 5l3 4 3-4" stroke="#e06028" stroke-width="1.800"/></svg></button>
<button class="arrow more" aria-label="更多"></button></div>
</div>

<div class="band d-flex flex-shrink-0" role="toolbar" aria-label="装配">
<div class="strip d-flex align-items-center">
<button class="tool" aria-label="查找组件"><svg viewBox="0 0 24 24"><use href="#cube" class="cy" x="6" y="8" width="16" height="15"/><path d="M3 2l5 1 6-1 3 5-4 2-3-3-3 3-4-1z" fill="#667090" stroke="#445"/></svg></button><button class="arrow" aria-label="菜单"></button>
<button class="tool" aria-label="组件组"><svg viewBox="0 0 24 24"><path d="M2 4l6-3 7 2v6l8 3v8l-7 3-14-3z" fill="#e4e8ee" stroke="#5a5ac8"/><path d="M5 5l4-2 4 2v6l-4 2-4-2zM5 13l4-1 4 2v6l-4 1-4-2zM13 13l4-1 4 2v5l-4 2-4-1M5 5l4 2 4-2M9 7v6M9 15v6M17 15v6" stroke="#889" stroke-width=".8"/></svg></button>
<button class="tool" aria-label="组件窗口"><svg viewBox="0 0 24 24"><path d="M2 2h20v20H2z" fill="#f4f4f4" stroke="#bbb"/><path d="M2 4h20" stroke="#bbb" stroke-width="3"/><g class="cl"><use href="#cube" x="5" y="7" width="8" height="8"/><use href="#cube" x="5" y="13" width="8" height="8"/><use href="#cube" x="12" y="13" width="8" height="8"/></g></svg></button>
<button class="tool" aria-label="添加组件"><svg viewBox="0 0 24 24"><g class="cy"><use href="#cube" x="1" y="2" width="11" height="11"/><use href="#cube" x="1" y="12" width="9" height="11"/><use href="#cube" x="9" y="12" width="9" height="11"/></g><path d="M19 1v9M14.500 5.500h9" stroke="#3878e0" stroke-width="2.500"/></svg></button><button class="arrow" aria-label="菜单"></button>
<button class="tool" aria-label="移动组件"><svg viewBox="0 0 24 24"><use href="#cube" class="cy" x="6" y="5" width="12" height="13"/><path d="M16 2h6v6M18 5h2v2M2 16v6h6M5 18v2h2" stroke="#3a60c0" stroke-dasharray="2 1"/></svg></button>
<button class="tool" aria-label="装配约束"><svg viewBox="0 0 24 24"><use href="#mate"/></svg></button>
<button class="tool" aria-label="显示约束"><svg viewBox="0 0 24 24"><path d="M1 5v9l6-4.500z" class="dg"/><path d="M2 13v9l7-5z" class="dr"/><path d="M12 9h11M17.500 1v8M12 22l5-8M17 22l5-8" stroke="#a04070" stroke-width="1.500"/></svg></button><i class="rule"></i>
<button class="tool" aria-label="镜像装配"><svg viewBox="0 0 24 24"><g class="cy"><use href="#cube" x="10" y="1" width="8" height="8"/><use href="#cube" x="15" y="7" width="8" height="8"/><use href="#cube" x="8" y="7" width="8" height="8"/></g><path d="M1 20l5-5 1-4 5 3-1 4-4 1-3 4z" class="vy"/></svg></button>
<button class="tool" aria-label="阵列组件"><svg viewBox="0 0 24 24" class="cy"><use href="#cube" x="1" y="1" width="11" height="11"/><use href="#cube" x="1" y="12" width="11" height="11"/><use href="#cube" x="12" y="12" width="11" height="11"/></svg></button>
<button class="tool" aria-label="序列"><svg viewBox="0 0 24 24" stroke="#333" stroke-width="1.300"><path d="M16 2h6v6h-6zM10 8h6v6h-6z" fill="#fff"/><path d="M3 15h6v7H3z" fill="#fbe030" stroke="#d23a36"/><path d="M9 15l1-1"/></svg></button><i class="rule"></i>
<button class="tool" aria-label="替换组件"><svg viewBox="0 0 24 24"><path d="M2 7l9-5 12 4v11l-9 6-12-4z" fill="#aaa" stroke="#666"/><path d="M2 7l9-5 12 4-8 5z" fill="#ddd"/><path d="M1 16l11-3 3 3-3 5-11 2z" fill="#fde0b0" stroke="#e09038"/></svg></button><i class="rule"></i>
<button class="tool" aria-label="链接"><svg><use href="#chain"/></svg></button>
<button class="tool" aria-label="部件间链接"><svg viewBox="0 0 24 24"><path d="M6 3h17v4H6zM6 5H2v7" fill="#eee" stroke="#444"/><path d="M0 9h4l-2 4z" class="dk"/><use href="#chain" x="10" y="9" width="15" height="15"/></svg></button>
<button class="tool" aria-label="关系浏览"><svg viewBox="0 0 24 24"><path d="M14 2h9v3h-9zM14 8h9v3h-9zM0 12h8v3H0z" fill="#a8b8f0" stroke="#448"/><path d="M8 13l6-9M8 13l6-4M8 13l5 5" stroke="#444"/><path d="M13 13h10v10H13z" fill="#eef" stroke="#33a"/><path d="M17 16h2v5M16 21h5" stroke="#226" stroke-width="1.500"/></svg></button><i class="rule"></i>
<button class="tool" aria-label="间隙分析"><svg viewBox="0 0 24 24"><g class="cg"><use href="#cube" x="10" y="1" width="13" height="13"/><use href="#cube" x="1" y="9" width="13" height="13"/></g><path d="M10 9h3v3h-3z" fill="#e46a62"/></svg></button><button class="arrow" aria-label="菜单"></button>
<button class="arrow more" aria-label="更多"></button></div>
<div class="strip d-flex align-items-center"><i class="grip"></i>
<button class="tool" aria-label="草图"><svg viewBox="0 0 24 24"><path d="M2 1l16 4v18L2 20z" fill="#e4ebe4" stroke="#454" stroke-width="1.300"/><path d="M5 6l3 1v4l-3-1zM5 13h4v5H5zM11 13l4 1v5h-4z" stroke="#454"/><path d="M17 1l1 5 5-2-3 4 4 3-5 0-1 5-2-5-5 1 3-4-3-3 5 1z" fill="#fbee50" stroke="#cb3" stroke-width=".6"/></svg></button>
<button class="tool" aria-label="完成"><svg viewBox="0 0 24 24"><path d="M0 0h24v24H0z" fill="#ddd" stroke="#bbb"/><path d="M3 4c5 2 9-2 17 1v11c-5-2-8 1-12-1z" fill="#fff" stroke="#888"/><path d="M4 5h3v3H4zM10 5h3v3h-3zM16 4h3v3h-3zM7 8h3v3H7zM13 8h3v3h-3zM8 11h3v3H8zM16 11h3v3h-3z" fill="#888"/><path d="M3 3l7 19" stroke="#888"/></svg></button><button class="caption text-black-50 opacity-50" disabled>完成草图</button>
<button class="tool" aria-label="轮廓"><svg viewBox="0 0 24 24"><path d="M2 2v12c0 9 10 8 10 0s8-10 8 0" class="vk"/><g class="dr"><circle cx="2" cy="13" r="2"/><circle cx="12" cy="13" r="2"/><circle cx="20" cy="13" r="2"/></g></svg></button>
<button class="tool" aria-label="直线"><svg viewBox="0 0 24 24"><path d="M3 20L20 4" class="vk"/><circle cx="3" cy="20" r="2" class="dr"/><circle cx="20" cy="4" r="2" class="dr"/></svg></button>
<button class="tool" aria-label="圆弧"><svg viewBox="0 0 24 24"><path d="M3 4c11 0 17 7 18 16" class="vk"/><g class="dr"><circle cx="3" cy="4" r="2"/><circle cx="16" cy="8" r="2"/><circle cx="21" cy="20" r="2"/></g></svg></button>
<button class="tool" aria-label="圆"><svg viewBox="0 0 24 24"><circle cx="12" cy="12" r="10" class="vk"/></svg></button>
<button class="tool" aria-label="圆角"><svg viewBox="0 0 24 24"><path d="M2 2c13-1 19 4 19 20" class="vl"/><path d="M16 2h5v6" stroke="#bbb" stroke-dasharray="1 1"/></svg></button>
<button class="tool" aria-label="倒角"><svg viewBox="0 0 24 24"><path d="M1 2h12l9 9v12" class="vl"/><path d="M13 2h9v9" stroke="#bbb" stroke-dasharray="1 1"/></svg></button>
<button class="tool" aria-label="矩形"><svg viewBox="0 0 24 24"><path d="M2 5h19v13H2z" class="vk"/><circle cx="2" cy="5" r="2" class="dr"/><circle cx="21" cy="18" r="2" class="dr"/></svg></button>
<button class="tool" aria-label="样条"><svg viewBox="0 0 24 24"><path d="M2 12l5-9 8 17 6-10" stroke="#999"/><path d="M2 12c5-6 8 5 13 2 3-1 4-1 6-4" class="vk"/><g class="dl" stroke="#888"><circle cx="2" cy="12" r="1.500"/><circle cx="7" cy="3" r="1.500"/><circle cx="15" cy="20" r="1.500"/><circle cx="21" cy="10" r="1.500"/></g><circle cx="7" cy="10" r="2" class="dr"/><circle cx="15" cy="14" r="2" class="dr"/></svg></button>
<button class="tool" aria-label="点"><svg viewBox="0 0 24 24"><path d="M12 3v18M3 12h18" stroke="#333" stroke-width="1.800"/></svg></button>
<button class="tool" aria-label="偏置曲线"><svg viewBox="0 0 24 24"><path d="M2 21V9l3-4h9v6c6-1 8 2 8 6-1 3-3 4-7 4zM5 18v-8l2-2h4v6c5-1 8 0 7 2 0 2-2 2-4 2z" class="vl"/></svg></button><button class="arrow" aria-label="菜单"></button><i class="rule"></i>
<button class="tool" aria-label="快速修剪"><svg viewBox="0 0 24 24"><path d="M4 1l11 20M1 16h12" class="vl"/><path d="M13 16h9" stroke="#aaa" stroke-dasharray="1 1"/><use href="#graypen" x="12" y="4" width="10" height="10"/></svg></button>
<button class="tool" aria-label="快速延伸"><svg viewBox="0 0 24 24"><path d="M4 2l10 20 8-19M0 16h14" class="vl"/><use href="#graypen" x="13" y="3" width="10" height="12"/></svg></button>
<button class="tool" aria-label="拐角"><svg viewBox="0 0 24 24"><path d="M1 10h13v12M10 5l9 9" class="vl"/><path d="M14 1v9h9" stroke="#aaa" stroke-dasharray="1 1"/></svg></button><i class="rule"></i>
<button class="tool" aria-label="快速尺寸"><svg viewBox="0 0 24 24"><path d="M1 9v9M23 9v9M1 14h22M1 14l4-3v6zM23 14l-4-3v6z" class="vl"/><path d="M17 2L7 12h5l-5 8 13-10h-5l4-8z" fill="#ddd" stroke="#aaa"/></svg></button><button class="arrow" aria-label="菜单"></button><i class="rule"></i>
<button class="tool" aria-label="几何约束"><svg viewBox="0 0 24 24"><path d="M2 16L9 8M6 17l7-8M11 22h11M16 13v9" class="vl"/></svg></button>
<button class="tool" aria-label="对称"><svg viewBox="0 0 24 24"><path d="M5 2H2v20h3M19 2h3v20h-3M6 5h5M18 5h-5M8 5v6M16 5v6" class="vl"/><path d="M12 2v20" stroke="#aaa" stroke-dasharray="4 2"/><path d="M8 2l4 3-4 3zM16 2l-4 3 4 3z" class="dl"/></svg></button>
<button class="tool" aria-label="显示约束"><svg viewBox="0 0 24 24"><path d="M0 8v9l6-4.500z" class="dl"/><path d="M10 10l7-8M14 11l8-9M11 22h11M16 14v8" class="vl"/></svg></button><button class="arrow" aria-label="菜单"></button><i class="rule"></i>
<button class="tool" aria-label="附着"><svg viewBox="0 0 24 24" stroke="#999"><path d="M2 2h10v9H2zM9 13h14v9H9z"/><path d="M1 17h6v6H1zM3 21l3-3" /><use href="#graypen" x="11" y="5" width="12" height="12"/></svg></button>
<button class="tool" aria-label="锁定"><svg viewBox="0 0 24 24"><path d="M1 17l4-5h10l4 4v5l-5 2H3z" fill="#ddd" stroke="#bbb"/><path d="M14 15h8v7h-8zM16 15v-3h4v3" fill="#ddd" stroke="#bbb"/><circle cx="6" cy="6" r="4" class="vl"/></svg></button>
<button class="tool" aria-label="更新"><svg viewBox="0 0 24 24"><path d="M1 17l5-5h12l4 3-5 7H1z" fill="#ccc" stroke="#bbb"/><path d="M1 17l5-5h12l4 3-5 3z" fill="#e8e8e8"/></svg></button>
<button class="arrow more" aria-label="更多"></button></div>
</div>
<footer class="base flex-shrink-0"></footer>

<div class="ime" role="img" aria-label="输入法"><svg viewBox="0 0 77 26"><path d="M6 6v15M9 6v15M12 6v15" stroke="#000" stroke-width="1.500" stroke-dasharray="1.500 2"/><path d="M19 7l13-2 2 13-13 3z" fill="#f4511e"/><text x="22" y="19" font-size="15" font-weight="700" fill="#fff">S</text><circle cx="49" cy="13" r="7" fill="#0b1fb8" stroke="#aac"/><text x="46" y="18" font-size="12" font-weight="700" fill="#fff">?</text><path d="M68 9h5M68 17h5l-2.500 3z" stroke="#fff" stroke-width="1.500" fill="#fff"/></svg></div>
<script src="https://cdn.jsdelivr.net/npm/bootstrap@5.3.0/dist/js/bootstrap.bundle.min.js"></script>
</body>
</html>
